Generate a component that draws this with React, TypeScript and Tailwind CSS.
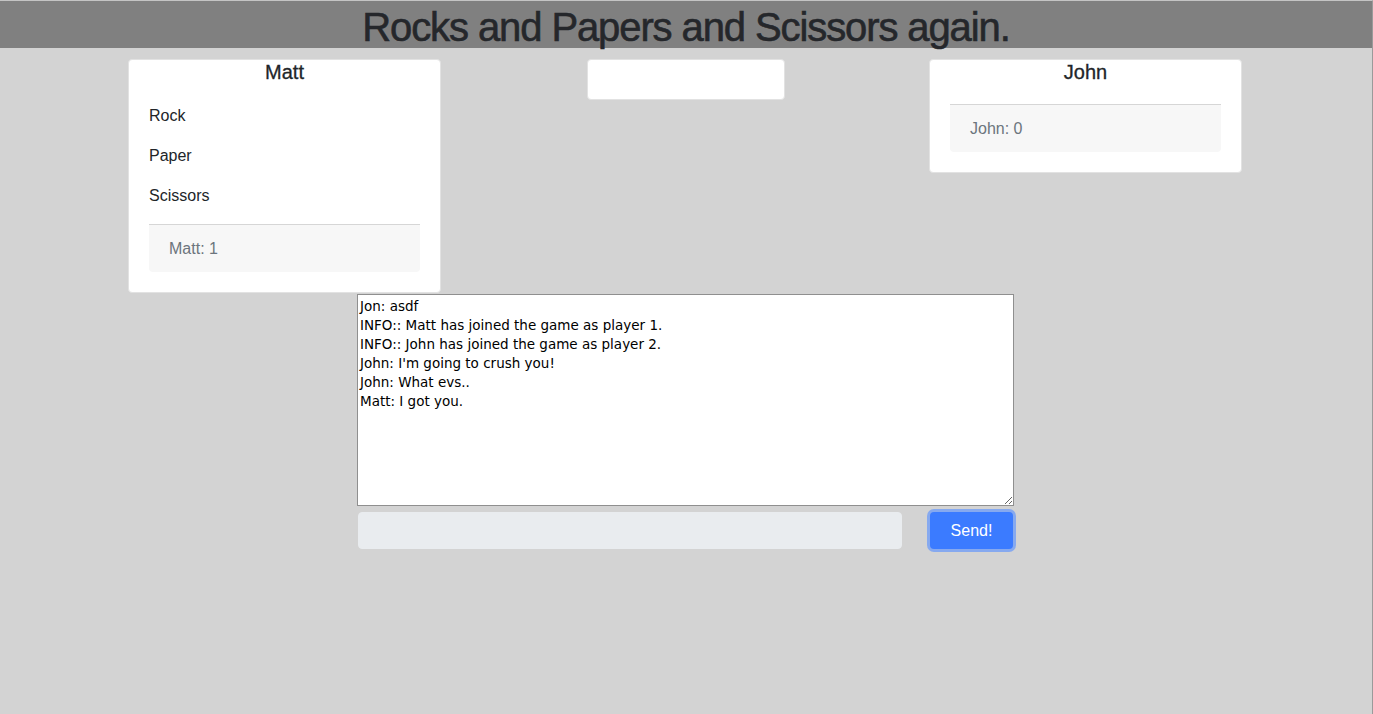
const messages = [
  "Jon: asdf",
  "INFO:: Matt has joined the game as player 1.",
  "INFO:: John has joined the game as player 2.",
  "John: I'm going to crush you!",
  "John: What evs..",
  "Matt: I got you.",
];

function PlayerCard({ name, score, moves }: { name: string; score: number; moves: string[] }) {
  return (
    <div className="w-[313px] shrink-0 rounded-[4px] border border-[#e2e2e2] bg-white px-5 pb-5">
      <h5 className="text-center text-[20px] leading-[24px] text-[#212529] [-webkit-text-stroke:0.3px_#212529]">
        {name}
      </h5>
      <ul className="pt-3 pb-2">
        {moves.map((m) => (
          <li key={m} className="h-10 text-[16px] leading-10 text-[#212529]">
            {m}
          </li>
        ))}
      </ul>
      <div className="h-[48px] rounded-b-[4px] border-t border-[#d6d6d6] bg-[#f7f7f7] px-5 text-[16px] leading-[47px] text-[#6c757d]">
        {name}: {score}
      </div>
    </div>
  );
}

export default function App() {
  return (
    <div className="flex min-h-[714px] flex-col border-t border-[#c4c4c4] border-r border-r-[#9a9a9a] bg-[#d3d3d3] font-['Liberation_Sans',Arial,sans-serif]">
      <header className="h-[47px] bg-[#808080] text-center">
        <h1 className="pt-[2px] text-[40px] leading-[48px] tracking-[-1.1px] text-[#25272b] [-webkit-text-stroke:0.6px_#25272b]">
          Rocks and Papers and Scissors again.
        </h1>
      </header>

      <div className="mt-[11px] flex items-start pl-[128px]">
        <PlayerCard name="Matt" score={1} moves={["Rock", "Paper", "Scissors"]} />
        <div className="ml-[146px] h-[41px] w-[198px] rounded-[4px] border border-[#e2e2e2] bg-white" />
        <div className="ml-[144px]">
          <PlayerCard name="John" score={0} moves={[]} />
        </div>
      </div>

      <div className="mt-px ml-[357px] w-[658px]">
        <textarea
          readOnly
          value={messages.join("\n")}
          className="block h-[212px] w-[657px] resize-y border border-[#8f8f8f] bg-white px-[2px] pt-[2px] font-['DejaVu_Sans',Verdana,sans-serif] text-[13.5px] leading-[19px] text-black outline-none"
        />
        <div className="mt-[6px] flex items-center justify-between">
          <input className="ml-px h-[37px] w-[544px] rounded-[4px] border border-[#e9ecef] bg-[#e9ecef] outline-none" />
          <button className="mr-[2px] h-[37px] w-[83px] rounded-[4px] bg-[#3b7bff] text-[16px] text-white shadow-[0_0_0_3px_#86a9ef]">
            Send!
          </button>
        </div>
      </div>
    </div>
  );
}
